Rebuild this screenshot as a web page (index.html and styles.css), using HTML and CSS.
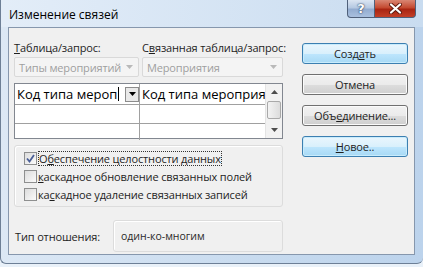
FILE: index.html
```html
<!DOCTYPE html>
<html lang="ru">
<head>
    <meta charset="UTF-8">
    <title>Изменение связей</title>
    <link rel="stylesheet" href="styles.css">
</head>
<body>
    <div class="window">
        <div class="titlebar">
            <span class="title">Изменение связей</span>
            <div class="caption">
                <div class="cap help">?</div>
                <div class="cap close">
                    <svg width="13" height="11" viewBox="0 0 13 11"><path d="M2 1.5 L11 9.5 M11 1.5 L2 9.5" stroke="#5e1a10" stroke-width="4" stroke-linecap="round"/><path d="M2 1.5 L11 9.5 M11 1.5 L2 9.5" stroke="#fff" stroke-width="2.2" stroke-linecap="round"/></svg>
                </div>
            </div>
        </div>
        <div class="client">
            <div class="left">
                <div class="pair labels">
                    <span class="col1"><u>Т</u>аблица/запрос:</span>
                    <span class="col2">С<u>в</u>язанная таблица/запрос:</span>
                </div>
                <div class="pair combos">
                    <div class="combo col1"><span>Типы мероприятий</span><svg width="7" height="4" viewBox="0 0 7 4"><path d="M0 0h7L3.5 4z" fill="#b9b9b9"/></svg></div>
                    <div class="combo col2"><span>Мероприятия</span><svg width="7" height="4" viewBox="0 0 7 4"><path d="M0 0h7L3.5 4z" fill="#b9b9b9"/></svg></div>
                </div>
                <div class="fields">
                    <div class="fields-body">
                        <div class="frow head">
                            <div class="fcell c1"><span class="ftext">Код типа мероп</span><span class="caret"></span><span class="drop"><svg width="7" height="4" viewBox="0 0 7 4"><path d="M0 0h7L3.5 4z" fill="#000"/></svg></span></div>
                            <div class="fcell c2"><span class="ftext">Код типа мероприя</span></div>
                        </div>
                        <div class="frow"><div class="fcell c1"></div><div class="fcell c2"></div></div>
                        <div class="frow last"><div class="fcell c1"></div><div class="fcell c2"></div></div>
                    </div>
                    <div class="vscroll">
                        <span class="sarrow"><svg width="7" height="4" viewBox="0 0 7 4"><path d="M0 4h7L3.5 0z" fill="#4d4d4d"/></svg></span>
                        <span class="thumb"></span>
                        <span class="track"></span>
                        <span class="sarrow"><svg width="7" height="4" viewBox="0 0 7 4"><path d="M0 0h7L3.5 4z" fill="#4d4d4d"/></svg></span>
                    </div>
                </div>
                <div class="checks">
                    <div class="check">
                        <span class="box"><svg width="9" height="9" viewBox="0 0 9 9"><path d="M1 4.5 L3.5 7.5 L8 1" fill="none" stroke="#4a5f97" stroke-width="1.8"/></svg></span>
                        <span class="focus">О<u>б</u>еспечение целостности данных</span>
                    </div>
                    <div class="check">
                        <span class="box"></span>
                        <span><u>к</u>аскадное обновление связанных полей</span>
                    </div>
                    <div class="check">
                        <span class="box"></span>
                        <span>ка<u>с</u>кадное удаление связанных записей</span>
                    </div>
                </div>
                <div class="relation">
                    <span class="rel-label">Тип отношения:</span>
                    <div class="rel-value">один-ко-многим</div>
                </div>
            </div>
            <div class="buttons">
                <span class="btn glow">Созд<u>а</u>ть</span>
                <span class="btn">Отмена</span>
                <span class="btn">Объ<u>е</u>динение...</span>
                <span class="btn glow"><u>Н</u>овое..</span>
            </div>
        </div>
    </div>
</body>
</html>
```

FILE: styles.css
```css
body { margin: 0; background: #e9f1f9; font-family: "Open Sans", "Noto Sans", sans-serif; font-size: 11px; letter-spacing: -0.15px; color: #1e1e1e; }
u { text-decoration-thickness: 1px; text-underline-offset: 1px; }

.window { width: 423px; height: 264px; box-sizing: border-box; border-left: 1px solid #6d7f96; border-bottom: 1px solid #6d7f96; border-radius: 0 0 6px 6px; background: linear-gradient(to right, #dce8f5, #c8dbef 60%, #bcd3ec); display: flex; flex-direction: column; }

.titlebar { height: 27px; flex-shrink: 0; display: flex; align-items: flex-start; background: linear-gradient(to right, #e3edf8, #c9dcf0); }
.title { font-size: 12px; letter-spacing: 0; color: #000; margin: 6px 0 0 8px; }
.caption { margin-left: auto; margin-right: 7px; display: flex; height: 18px; }
.cap { height: 18px; display: flex; align-items: center; justify-content: center; border: 1px solid #4f607a; border-top: none; box-sizing: border-box; }
.help { width: 28px; border-radius: 0 0 0 4px; background-color: #a9bedb; background-image: linear-gradient(#dbe5f2, #b6c9e2 45%, #93acd0 55%, #a9c0df); color: #fff; font: bold 13px "DejaVu Sans", sans-serif; text-shadow: 0 0 2px #24385a, 0 0 1px #24385a; }
.close { width: 41px; border-left: none; border-radius: 0 0 4px 0; background-color: #c4452f; background-image: linear-gradient(#d98673, #c44a31 45%, #a92512 55%, #c33f27); }

.client { flex: 1; margin: 0 8px 8px 7px; border: 1px solid #8697ad; background: #f0f0f0; display: flex; padding: 12px 0 0 5px; }

.left { width: 269px; display: flex; flex-direction: column; }
.pair { display: flex; gap: 3px; }
.col1 { width: 125px; }
.col2 { width: 141px; }
.labels { height: 15px; line-height: 15px; white-space: nowrap; }
.combos { margin-top: 2px; height: 20px; }
.combo { box-sizing: border-box; border: 1px solid #d9d9d9; border-radius: 2px; background: #f4f4f4; color: #9f9f9f; display: flex; align-items: center; justify-content: space-between; padding: 0 5px 0 4px; white-space: nowrap; }

.fields { margin-top: 6px; height: 56px; box-sizing: border-box; border: 1px solid #828790; background: #fff; display: flex; }
.fields-body { flex: 1; }
.frow { display: flex; height: 18px; border-bottom: 1px solid #a0a0a0; }
.frow.head { height: 20px; }
.frow.last { border-bottom: none; height: 16px; }
.fcell { display: flex; align-items: center; overflow: hidden; white-space: nowrap; }
.c1 { width: 124px; border-right: 1px solid #a0a0a0; }
.c2 { flex: 1; width: 0; }
.ftext { font-size: 13px; letter-spacing: 0; color: #000; padding-left: 2px; }
.caret { width: 1px; height: 14px; background: #000; margin-left: 1px; }
.drop { margin-left: auto; width: 14px; height: 15px; box-sizing: border-box; border: 1px solid #8c8c8c; background: #e9e9e9; display: flex; align-items: center; justify-content: center; }

.vscroll { width: 16px; display: flex; flex-direction: column; background: #f2f2f2; border-left: 1px solid #e4e4e4; }
.sarrow { height: 16px; display: flex; align-items: center; justify-content: center; }
.thumb { height: 16px; margin: 1px 1px; border: 1px solid #a9a9a9; border-radius: 2px; background: linear-gradient(to right, #f3f3f3, #dcdcdc); }
.track { flex: 1; }

.checks { margin-top: 6px; height: 62px; box-sizing: border-box; border: 1px solid #dcdcdc; border-radius: 3px; box-shadow: inset 1px 1px 0 #fff; padding: 3px 0 0 9px; }
.check { height: 18px; display: flex; align-items: center; gap: 1px; white-space: nowrap; color: #1e1e1e; }
.box { width: 13px; height: 13px; box-sizing: border-box; border: 1px solid #8e8f8f; background: linear-gradient(135deg, #dcdcdc, #fbfbfb); display: flex; align-items: center; justify-content: center; }
.focus { outline: 1px dotted #333; outline-offset: -1px; padding: 0 1px; }

.relation { margin-top: 13px; height: 32px; display: flex; align-items: center; }
.rel-label { width: 98px; padding-left: 1px; }
.rel-value { flex: 1; height: 32px; box-sizing: border-box; border: 1px solid #dcdcdc; border-radius: 3px; box-shadow: inset 1px 1px 0 #fff; font-size: 10.5px; letter-spacing: 0; color: #2a2a2a; padding: 8px 0 0 7px; }

.buttons { margin-left: 19px; margin-top: 3px; display: flex; flex-direction: column; gap: 10px; width: 106px; }
.btn { height: 21px; box-sizing: border-box; border: 1px solid #707070; border-radius: 3px; background: linear-gradient(#f2f2f2, #ebebeb 50%, #dddddd 51%, #cfcfcf); box-shadow: inset 0 0 0 1px #fbfbfb; display: flex; align-items: center; justify-content: center; color: #1e1e1e; }
.btn.glow { border-color: #3c7fb1; background: linear-gradient(#eaf6fd, #d9f0fc 50%, #bee6fd 51%, #a7d9f5); box-shadow: inset 0 0 0 1px #c9ecfc; }
```
